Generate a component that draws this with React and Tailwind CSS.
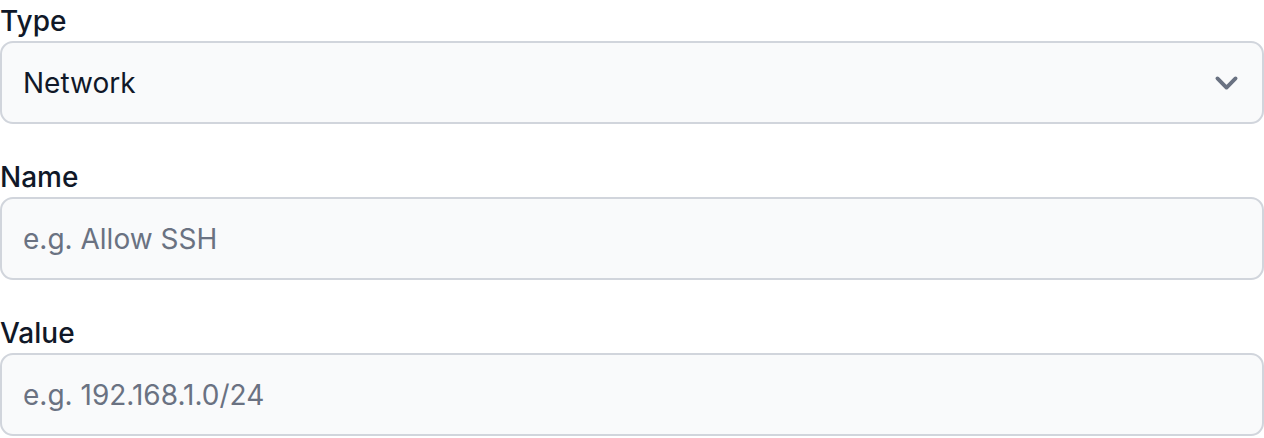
import { useState } from 'react';

const font = { fontFamily: 'Inter, "Noto Sans", sans-serif' };

function Label({ children, htmlFor }) {
  return (
    <label htmlFor={htmlFor} className="block text-[28px] leading-[40px] font-medium text-gray-900">
      {children}
    </label>
  );
}

const inputCls =
  'block w-full h-[83px] rounded-[13px] border-2 border-gray-300 bg-gray-50 px-[21px] text-[28px] text-gray-900 placeholder:text-gray-500 outline-none';

export default function App() {
  const [type, setType] = useState('network');
  const [name, setName] = useState('');
  const [value, setValue] = useState('');

  return (
    <div className="w-[1264px] bg-white pt-[1px] flex flex-col gap-[33px]" style={font}>
      <div>
        <Label htmlFor="type">Type</Label>
        <div className="relative">
          <select
            id="type"
            value={type}
            onChange={(e) => setType(e.target.value)}
            className={`${inputCls} appearance-none pr-16`}
          >
            <option value="network">Network</option>
            <option value="host">Host</option>
            <option value="port">Port</option>
          </select>
          {/* chevron */}
          <svg
            className="pointer-events-none absolute right-[23px] top-1/2 -translate-y-1/2 w-[29px] h-[29px] text-gray-500"
            viewBox="0 0 24 24"
            fill="none"
            stroke="currentColor"
            strokeWidth={3.2}
          >
            <path strokeLinecap="round" strokeLinejoin="round" d="m19.5 8.25-7.5 7.5-7.5-7.5" />
          </svg>
        </div>
      </div>

      <div>
        <Label htmlFor="name">Name</Label>
        <input
          id="name"
          value={name}
          onChange={(e) => setName(e.target.value)}
          placeholder="e.g. Allow SSH"
          className={inputCls}
        />
      </div>

      <div>
        <Label htmlFor="value">Value</Label>
        <input
          id="value"
          value={value}
          onChange={(e) => setValue(e.target.value)}
          placeholder="e.g. 192.168.1.0/24"
          className={inputCls}
        />
      </div>
    </div>
  );
}
